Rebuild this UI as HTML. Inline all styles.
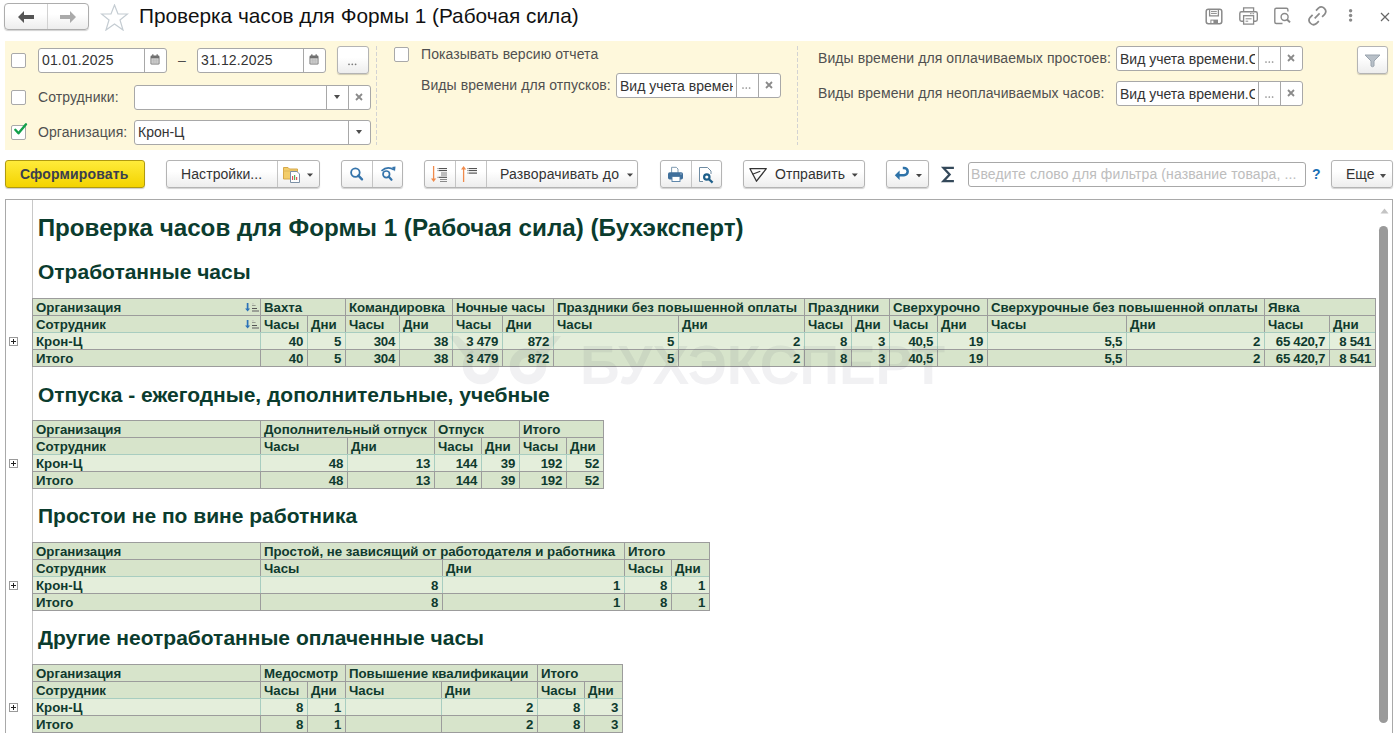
<!DOCTYPE html>
<html><head><meta charset="utf-8">
<style>
*{box-sizing:border-box}
html,body{margin:0;padding:0}
body{width:1396px;height:733px;overflow:hidden;background:#fff;position:relative;font-family:"Liberation Sans",sans-serif;color:#4d4d4d}
.a{position:absolute}
.t{position:absolute;line-height:1;white-space:nowrap}
.l{letter-spacing:.08px;color:#505050}
.btn{position:absolute;border:1px solid #b4b4b4;border-radius:3px;background:linear-gradient(#fff 40%,#ededed);box-shadow:0 1px 1px rgba(0,0,0,.18)}
.inp{position:absolute;border:1px solid #a8a8a8;border-radius:3px;background:#fff}
.sep{position:absolute;top:0;bottom:0;width:1px;background:#cfcfcf}
.cb{position:absolute;width:15px;height:15px;border:1px solid #a9a9a9;border-radius:2px;background:#fff}
.dd{position:absolute;width:0;height:0;border-left:3.5px solid transparent;border-right:3.5px solid transparent;border-top:4px solid #4d4d4d}
.x{position:absolute;font-size:13px;line-height:1;color:#7a7a7a}
.c{position:absolute;line-height:18px;height:16px;font-size:13.25px;font-weight:bold;color:#0f3a2e;white-space:nowrap}
.n{letter-spacing:-.3px}
.pl{position:absolute;left:9px;width:9px;height:9px;border:1px solid #9a9a9a;background:#fff}
.pl:before{content:"";position:absolute;left:1px;top:3px;width:5px;height:1px;background:#222}
.pl:after{content:"";position:absolute;left:3px;top:1px;width:1px;height:5px;background:#222}
.dsh{position:absolute;width:1px;background:repeating-linear-gradient(#d3d3d3 0 4px,transparent 4px 6px)}
</style></head><body>

<!-- ===== HEADER ===== -->
<div class="btn" style="left:4px;top:3px;width:85px;height:27px;border-radius:4px;border-color:#adadad"></div>
<div class="a" style="left:47px;top:4px;width:1px;height:25px;background:#d2d2d2"></div>
<svg class="a" style="left:17px;top:10px" width="18" height="14" viewBox="0 0 18 14"><path d="M1 7 L7 1 L7 5 L17 5 L17 9 L7 9 L7 13 Z" fill="#555"/></svg>
<svg class="a" style="left:59px;top:10px" width="18" height="14" viewBox="0 0 18 14"><path d="M17 7 L11 1 L11 5 L1 5 L1 9 L11 9 L11 13 Z" fill="#aaa"/></svg>
<svg class="a" style="left:100px;top:4px" width="29" height="27" viewBox="0 0 29 27"><path d="M14.5 1 L18 10 L27.5 10 L20 16 L23 26 L14.5 20 L6 26 L9 16 L1.5 10 L11 10 Z" fill="none" stroke="#c4ccd2" stroke-width="1.2" stroke-linejoin="miter"/></svg>
<div class="t" style="left:139px;top:6px;font-size:20.8px;color:#111">Проверка часов для Формы 1 (Рабочая сила)</div>

<!-- header right icons -->
<svg class="a" style="left:1196px;top:0px" width="200" height="36" viewBox="1196 0 200 36">
<g fill="none" stroke="#8a8a8a">
<rect x="1206.2" y="9.2" width="15.6" height="14.6" rx="2.2" stroke-width="1.5"/>
<path d="M1209.6 9.2 L1209.6 15.9 L1218.4 15.9 L1218.4 9.2" stroke-width="1.3"/>
<path d="M1211 11.4 L1216.8 11.4 M1211 13.4 L1216.8 13.4" stroke-width="1"/>
<path d="M1243.6 11.3 L1243.6 7.9 L1253.6 7.9 L1253.6 11.3" stroke-width="1.3"/>
<path d="M1243.3 21.3 L1241.5 21.3 Q1239.8 21.3 1239.8 19.6 L1239.8 13.4 Q1239.8 11.7 1241.5 11.7 L1255.6 11.7 Q1257.3 11.7 1257.3 13.4 L1257.3 19.6 Q1257.3 21.3 1255.6 21.3 L1253.9 21.3" stroke-width="1.4"/>
<rect x="1243.6" y="15.7" width="10" height="8.4" stroke-width="1.3"/>
<path d="M1245.6 18.8 L1251.6 18.8 M1245.6 21.2 L1248.2 21.2" stroke-width="1"/>
<path d="M1282.5 23.5 L1276.3 23.5 Q1274.8 23.5 1274.8 22 L1274.8 9.8 Q1274.8 8.3 1276.3 8.3 L1286.4 8.3 Q1287.9 8.3 1287.9 9.8 L1287.9 11.6" stroke-width="1.4"/>
<circle cx="1284.6" cy="17" r="3.5" stroke-width="1.4"/>
<path d="M1287.1 19.5 L1290 22.4" stroke-width="2"/>
<path d="M1316 10.6 L1318.4 8.2 A4.4 4.4 0 0 1 1324.6 14.4 L1322.1 16.9" stroke-width="1.7"/>
<path d="M1312.6 14.9 L1310.2 17.3 A4.4 4.4 0 0 0 1316.4 23.5 L1318.8 21.1" stroke-width="1.7"/>
<path d="M1314.7 18.3 L1319.6 13.4" stroke-width="1.7"/>
<path d="M1381 13 L1389 21 M1389 13 L1381 21" stroke="#666" stroke-width="1.2"/>
</g>
<g fill="#8a8a8a">
<rect x="1210.4" y="19.6" width="7.6" height="4.4"/>
<rect x="1250" y="13.2" width="1.6" height="1" /><rect x="1252.5" y="13.2" width="1.6" height="1"/>
<circle cx="1350.6" cy="10.8" r="1.7"/><circle cx="1350.6" cy="15.5" r="1.7"/><circle cx="1350.6" cy="20.1" r="1.7"/>
</g>
<rect x="1211.4" y="20.6" width="2" height="2.4" fill="#fff"/>
</svg>
<!-- ===== FILTER PANEL ===== -->
<div class="a" style="left:5px;top:41px;width:1388px;height:109px;background:#fef8dc"></div>
<div class="dsh" style="left:376px;top:46px;height:99px"></div>
<div class="dsh" style="left:797px;top:46px;height:99px"></div>

<!-- row1 -->
<div class="cb" style="left:11px;top:53px"></div>
<div class="inp" style="left:38px;top:48px;width:129px;height:25px"><div class="sep" style="left:105px;background:#a8a8a8"></div></div>
<div class="t" style="left:42px;top:53px;font-size:14px;color:#333;letter-spacing:.15px">01.01.2025</div>
<svg class="a" style="left:150px;top:54px" width="10" height="11" viewBox="0 0 10 11"><rect x="0.5" y="1.5" width="9" height="9" rx="1.2" fill="#6e6e6e"/><rect x="1.3" y="4.3" width="7.4" height="5.4" fill="#d4d4d4"/><path d="M1.3 6.2 H8.7 M1.3 8 H8.7 M3.8 4.3 V9.7 M6.2 4.3 V9.7" stroke="#b0b0b0" stroke-width="0.5"/><rect x="2" y="0.2" width="1.6" height="2.6" rx=".6" fill="#7a7a7a"/><rect x="6.4" y="0.2" width="1.6" height="2.6" rx=".6" fill="#7a7a7a"/></svg>
<div class="t" style="left:178px;top:53px;font-size:14px;color:#4d4d4d">–</div>
<div class="inp" style="left:197px;top:48px;width:129px;height:25px"><div class="sep" style="left:105px;background:#a8a8a8"></div></div>
<div class="t" style="left:201px;top:53px;font-size:14px;color:#333;letter-spacing:.15px">31.12.2025</div>
<svg class="a" style="left:309px;top:54px" width="10" height="11" viewBox="0 0 10 11"><rect x="0.5" y="1.5" width="9" height="9" rx="1.2" fill="#6e6e6e"/><rect x="1.3" y="4.3" width="7.4" height="5.4" fill="#d4d4d4"/><path d="M1.3 6.2 H8.7 M1.3 8 H8.7 M3.8 4.3 V9.7 M6.2 4.3 V9.7" stroke="#b0b0b0" stroke-width="0.5"/><rect x="2" y="0.2" width="1.6" height="2.6" rx=".6" fill="#7a7a7a"/><rect x="6.4" y="0.2" width="1.6" height="2.6" rx=".6" fill="#7a7a7a"/></svg>
<div class="btn" style="left:337px;top:46px;width:32px;height:28px"></div>
<svg class="a" style="left:347px;top:62px" width="12" height="5" viewBox="347 62 12 5"><g fill="#7c7c7c"><circle cx="349" cy="64.3" r=".9"/><circle cx="352.3" cy="64.3" r=".9"/><circle cx="355.6" cy="64.3" r=".9"/></g></svg>

<!-- row2 -->
<div class="cb" style="left:11px;top:90px"></div>
<div class="t l" style="left:38px;top:90px;font-size:14px">Сотрудники:</div>
<div class="inp" style="left:134px;top:85px;width:237px;height:25px"><div class="sep" style="left:191px;background:#a8a8a8"></div><div class="sep" style="left:213px;background:#a8a8a8"></div></div>
<div class="dd" style="left:334px;top:95px"></div>
<svg class="a" style="left:355px;top:93px" width="8" height="8" viewBox="0 0 8 8"><path d="M1 1 L7 7 M7 1 L1 7" stroke="#8a8a8a" stroke-width="1.8"/></svg>

<!-- row3 -->
<div class="cb" style="left:11px;top:125px"></div>
<svg class="a" style="left:13px;top:122px" width="15" height="15" viewBox="0 0 15 15"><path d="M2.3 7.8 L5.5 11.3 L13 2.3" fill="none" stroke="#12a04a" stroke-width="2.4" stroke-linecap="round" stroke-linejoin="round"/></svg>
<div class="t l" style="left:38px;top:125px;font-size:14px">Организация:</div>
<div class="inp" style="left:134px;top:120px;width:237px;height:25px"><div class="sep" style="left:213px;background:#a8a8a8"></div></div>
<div class="t" style="left:138px;top:125px;font-size:14px;color:#333">Крон-Ц</div>
<div class="dd" style="left:356px;top:130px"></div>

<!-- col2 -->
<div class="cb" style="left:394px;top:47px"></div>
<div class="t l" style="left:421px;top:47px;font-size:14px">Показывать версию отчета</div>
<div class="t l" style="left:421px;top:78px;font-size:14px">Виды времени для отпусков:</div>
<div class="inp" style="left:616px;top:73px;width:165px;height:25px;overflow:hidden"><div class="sep" style="left:119px;background:#a8a8a8"></div><div class="sep" style="left:141px;background:#a8a8a8"></div></div>
<div class="a" style="left:617px;top:74px;width:116px;height:23px;overflow:hidden"><div class="t" style="left:3px;top:5px;font-size:14px;color:#333">Вид учета времени.Основное</div></div>
<svg class="a" style="left:741px;top:86px" width="12" height="4" viewBox="741 86 12 4"><g fill="#8c8c8c"><circle cx="743" cy="88" r=".85"/><circle cx="746.3" cy="88" r=".85"/><circle cx="749.6" cy="88" r=".85"/></g></svg>
<svg class="a" style="left:765px;top:81px" width="8" height="8" viewBox="0 0 8 8"><path d="M1 1 L7 7 M7 1 L1 7" stroke="#8a8a8a" stroke-width="1.8"/></svg>

<!-- col3 -->
<div class="t l" style="left:818px;top:51px;font-size:14px">Виды времени для оплачиваемых простоев:</div>
<div class="t l" style="left:818px;top:86px;font-size:14px">Виды времени для неоплачиваемых часов:</div>
<div class="inp" style="left:1116px;top:46px;width:187px;height:25px"><div class="sep" style="left:141px;background:#a8a8a8"></div><div class="sep" style="left:163px;background:#a8a8a8"></div></div>
<div class="a" style="left:1117px;top:47px;width:138px;height:23px;overflow:hidden"><div class="t" style="left:3px;top:5px;font-size:14px;color:#333">Вид учета времени.Основное</div></div>
<svg class="a" style="left:1264px;top:60px" width="12" height="4" viewBox="1264 60 12 4"><g fill="#8c8c8c"><circle cx="1266" cy="62" r=".85"/><circle cx="1269.3" cy="62" r=".85"/><circle cx="1272.6" cy="62" r=".85"/></g></svg>
<svg class="a" style="left:1287px;top:54px" width="8" height="8" viewBox="0 0 8 8"><path d="M1 1 L7 7 M7 1 L1 7" stroke="#8a8a8a" stroke-width="1.8"/></svg>
<div class="inp" style="left:1116px;top:81px;width:187px;height:25px"><div class="sep" style="left:141px;background:#a8a8a8"></div><div class="sep" style="left:163px;background:#a8a8a8"></div></div>
<div class="a" style="left:1117px;top:82px;width:138px;height:23px;overflow:hidden"><div class="t" style="left:3px;top:5px;font-size:14px;color:#333">Вид учета времени.Основное</div></div>
<svg class="a" style="left:1264px;top:95px" width="12" height="4" viewBox="1264 95 12 4"><g fill="#8c8c8c"><circle cx="1266" cy="97" r=".85"/><circle cx="1269.3" cy="97" r=".85"/><circle cx="1272.6" cy="97" r=".85"/></g></svg>
<svg class="a" style="left:1287px;top:89px" width="8" height="8" viewBox="0 0 8 8"><path d="M1 1 L7 7 M7 1 L1 7" stroke="#8a8a8a" stroke-width="1.8"/></svg>
<div class="btn" style="left:1357px;top:46px;width:31px;height:28px"></div>
<svg class="a" style="left:1364px;top:53px" width="17" height="15" viewBox="0 0 17 15"><path d="M1 2 L16 2 L10 8 L10 13 Q8.5 14.5 7 13 L7 8 Z" fill="#b8c0c8" stroke="#9aa4ae" stroke-width="1"/></svg>

<!-- TOOLBAR -->
<div class="a" style="left:5px;top:160px;width:140px;height:28px;border:1px solid #b09a10;border-radius:3px;background:linear-gradient(#ffeb3a,#f3d300);box-shadow:0 1px 1px rgba(0,0,0,.2)"></div>
<div class="t" style="left:20px;top:167px;font-size:14px;font-weight:bold;color:#3a3e4e;letter-spacing:.15px">Сформировать</div>

<div class="btn" style="left:166px;top:160px;width:154px;height:28px"><div class="sep" style="left:110px;background:#c4c4c4"></div></div>
<div class="t" style="left:181px;top:167px;font-size:14px;color:#333;letter-spacing:.08px">Настройки...</div>

<div class="btn" style="left:341px;top:160px;width:62px;height:28px"><div class="sep" style="left:30px;background:#c4c4c4"></div></div>
<div class="btn" style="left:424px;top:160px;width:214px;height:28px"><div class="sep" style="left:30px;background:#c4c4c4"></div><div class="sep" style="left:61px;background:#c4c4c4"></div></div>
<div class="t" style="left:500px;top:167px;font-size:14px;color:#333;letter-spacing:.15px">Разворачивать до</div>
<div class="btn" style="left:660px;top:160px;width:62px;height:28px"><div class="sep" style="left:30px;background:#c4c4c4"></div></div>
<div class="btn" style="left:743px;top:160px;width:122px;height:28px"></div>
<div class="t" style="left:775px;top:167px;font-size:14px;color:#333;letter-spacing:.08px">Отправить</div>
<div class="btn" style="left:886px;top:160px;width:43px;height:28px"></div>

<svg class="a" style="left:270px;top:155px" width="730" height="35" viewBox="270 155 730 35">
<!-- settings folder -->
<path d="M283.5 167.5 L288 167.5 L289.5 169 L297.5 169 L297.5 179 L283.5 179 Z" fill="#f3cd6a" stroke="#d6a84a" stroke-width="1"/>
<path d="M283.5 171 L297.5 171" stroke="#e0b85a" stroke-width="1"/>
<path d="M290.5 171.5 L297 171.5 L299.5 174 L299.5 182.5 L290.5 182.5 Z" fill="#fff" stroke="#7d91a6" stroke-width="1"/>
<rect x="292" y="176" width="1.2" height="4" fill="#e25555"/><rect x="294" y="175" width="1.2" height="5" fill="#58b058"/><rect x="296" y="177" width="1.2" height="3" fill="#e25555"/>
<path d="M307 173.5 L313 173.5 L310 176.8 Z" fill="#444"/>
<!-- search -->
<circle cx="355.4" cy="172.6" r="4.3" fill="none" stroke="#3574ab" stroke-width="1.8"/>
<path d="M358.4 175.6 L362 179.3" stroke="#3574ab" stroke-width="2.4" stroke-linecap="round"/>
<path d="M381.5 170.8 Q387.5 165.5 394 169.8" fill="none" stroke="#3574ab" stroke-width="1.6"/>
<path d="M392 167 L395.5 166.6 L395 171.6 Z" fill="#3574ab"/>
<circle cx="386.3" cy="174.3" r="3.3" fill="none" stroke="#3574ab" stroke-width="1.7"/>
<path d="M388.8 176.8 L391.5 179.8" stroke="#3574ab" stroke-width="2.2" stroke-linecap="round"/>
<!-- sort down -->
<path d="M433.6 166 L433.6 179" stroke="#f08a4b" stroke-width="1.3"/>
<path d="M431 178.5 L436.2 178.5 L433.6 182 Z" fill="#f08a4b"/>
<g fill="#555"><rect x="438.5" y="168" width="8.5" height="1.1"/><rect x="438.5" y="170" width="8.5" height="1.1"/><rect x="438.5" y="176.8" width="8.5" height="1.1"/></g>
<rect x="441" y="172" width="6" height="4.4" fill="#bdbdbd"/>
<g fill="#8a8a8a"><rect x="440" y="179" width="7" height="1"/><rect x="440" y="181" width="7" height="1"/></g>
<g fill="#aaa"><rect x="437.2" y="168" width="1" height="1.1"/><rect x="437.2" y="170" width="1" height="1.1"/><rect x="437.2" y="176.8" width="1" height="1.1"/></g>
<!-- sort up -->
<path d="M463.6 169 L463.6 182" stroke="#f08a4b" stroke-width="1.3"/>
<path d="M461 169.5 L466.2 169.5 L463.6 166 Z" fill="#f08a4b"/>
<g fill="#555"><rect x="468.5" y="168" width="8.5" height="1.1"/><rect x="468.5" y="170" width="8.5" height="1.1"/><rect x="468.5" y="172.5" width="8.5" height="1.2"/></g>
<g fill="#aaa"><rect x="467" y="168" width="1" height="1.1"/><rect x="467" y="170" width="1" height="1.1"/><rect x="467" y="172.5" width="1" height="1.1"/></g>
<path d="M627 173.5 L633 173.5 L630 176.8 Z" fill="#444"/>
<!-- print -->
<path d="M671.6 173 L671.6 167.3 L676.3 167.3 L678 169 L678 173" fill="#fff" stroke="#6f8ea8" stroke-width="0.9"/>
<rect x="668" y="172.3" width="15" height="7.2" rx="1.8" fill="#3f6f9b"/>
<rect x="672" y="176.5" width="8" height="5" fill="#fff" stroke="#4f7ba3" stroke-width="0.9"/>
<rect x="680.5" y="173.5" width="1" height="1" fill="#cfe0ee"/>
<!-- preview -->
<path d="M703 181.5 L699.5 181.5 L699.5 167.5 L707.5 167.5 L711 171 L711 174" fill="#fff" stroke="#5f7f98" stroke-width="0.9"/>
<circle cx="706.8" cy="177" r="2.7" fill="none" stroke="#1d5f8a" stroke-width="2.2"/>
<path d="M709 179.2 L712.6 182.6" stroke="#1d5f8a" stroke-width="2.2"/>
<!-- send -->
<path d="M750 168.7 L766.3 168.7 L756.5 181.2 Z" fill="none" stroke="#333" stroke-width="1.3" stroke-linejoin="round"/>
<path d="M752.5 174.2 L760.3 171.3" stroke="#333" stroke-width="1.2"/>
<path d="M851.8 173.5 L857.8 173.5 L854.8 176.8 Z" fill="#444"/>
<!-- back arrow + sigma -->
<path d="M899 175.3 L904 175.3 A3.7 3.7 0 0 0 904 167.9 L902.8 167.9" fill="none" stroke="#2d72a8" stroke-width="2.5"/>
<path d="M894.8 175.3 L899.6 170.6 L899.6 180 Z" fill="#2d72a8"/>
<path d="M916 174 L922 174 L919 177.2 Z" fill="#444"/>
<path d="M953.9 167.9 L943.5 167.9 L949.6 174.6 L943.5 181.1 L953.9 181.1" fill="none" stroke="#34495a" stroke-width="2.3" stroke-linejoin="miter"/>
</svg>
<div class="inp" style="left:968px;top:162px;width:338px;height:25px"></div>
<div class="t" style="left:971px;top:167px;font-size:14px;color:#bdbdbd;letter-spacing:.11px">Введите слово для фильтра (название товара, ...</div>
<div class="t" style="left:1312px;top:167px;font-size:14px;color:#1a6fb5;font-weight:bold">?</div>
<div class="btn" style="left:1331px;top:160px;width:62px;height:28px"></div>
<div class="t" style="left:1346px;top:167px;font-size:14px;color:#333">Еще</div>
<div class="dd" style="left:1380px;top:174px"></div>

<!-- REPORT -->
<div class="a" style="left:5px;top:199px;width:1388px;height:540px;border:1px solid #a9a9a9;border-bottom:0"></div>
<div class="a" style="left:32px;top:200px;width:1px;height:533px;background:#c8c8c8"></div>
<div class="t" style="left:37.7px;top:216.2px;font-size:24.2px;font-weight:bold;color:#0b3c2e">Проверка часов для Формы 1 (Рабочая сила) (Бухэксперт)</div>
<div class="t" style="left:38px;top:261px;font-size:21px;font-weight:bold;color:#0b3c2e">Отработанные часы</div>
<div class="t" style="left:38px;top:384px;font-size:21px;font-weight:bold;color:#0b3c2e">Отпуска - ежегодные, дополнительные, учебные</div>
<div class="t" style="left:38px;top:505px;font-size:21px;font-weight:bold;color:#0b3c2e">Простои не по вине работника</div>
<div class="t" style="left:38px;top:627px;font-size:21px;font-weight:bold;color:#0b3c2e">Другие неотработанные оплаченные часы</div>
<div class="a" style="left:32px;top:298px;width:1343px;height:34px;background:#d7e4cb"></div>
<div class="a" style="left:32px;top:332px;width:1343px;height:17px;background:#e4eedb"></div>
<div class="a" style="left:32px;top:349px;width:1343px;height:17px;background:#d7e4cb"></div>
<div class="c" style="left:36px;top:299px">Организация</div>
<div class="a" style="left:260px;top:298px;width:1px;height:17px;background:#9c9c9c"></div>
<div class="c" style="left:264px;top:299px">Вахта</div>
<div class="a" style="left:345px;top:298px;width:1px;height:17px;background:#9c9c9c"></div>
<div class="c" style="left:349px;top:299px">Командировка</div>
<div class="a" style="left:452px;top:298px;width:1px;height:17px;background:#9c9c9c"></div>
<div class="c" style="left:456px;top:299px">Ночные часы</div>
<div class="a" style="left:553px;top:298px;width:1px;height:17px;background:#9c9c9c"></div>
<div class="c" style="left:557px;top:299px">Праздники без повышенной оплаты</div>
<div class="a" style="left:804px;top:298px;width:1px;height:17px;background:#9c9c9c"></div>
<div class="c" style="left:808px;top:299px">Праздники</div>
<div class="a" style="left:889px;top:298px;width:1px;height:17px;background:#9c9c9c"></div>
<div class="c" style="left:893px;top:299px">Сверхурочно</div>
<div class="a" style="left:987px;top:298px;width:1px;height:17px;background:#9c9c9c"></div>
<div class="c" style="left:991px;top:299px">Сверхурочные без повышенной оплаты</div>
<div class="a" style="left:1264px;top:298px;width:1px;height:17px;background:#9c9c9c"></div>
<div class="c" style="left:1268px;top:299px">Явка</div>
<div class="c" style="left:36px;top:316px">Сотрудник</div>
<div class="a" style="left:260px;top:315px;width:1px;height:17px;background:#9c9c9c"></div>
<div class="c" style="left:264px;top:316px">Часы</div>
<div class="a" style="left:307px;top:315px;width:1px;height:17px;background:#9c9c9c"></div>
<div class="c" style="left:311px;top:316px">Дни</div>
<div class="a" style="left:345px;top:315px;width:1px;height:17px;background:#9c9c9c"></div>
<div class="c" style="left:349px;top:316px">Часы</div>
<div class="a" style="left:399px;top:315px;width:1px;height:17px;background:#9c9c9c"></div>
<div class="c" style="left:403px;top:316px">Дни</div>
<div class="a" style="left:452px;top:315px;width:1px;height:17px;background:#9c9c9c"></div>
<div class="c" style="left:456px;top:316px">Часы</div>
<div class="a" style="left:502px;top:315px;width:1px;height:17px;background:#9c9c9c"></div>
<div class="c" style="left:506px;top:316px">Дни</div>
<div class="a" style="left:553px;top:315px;width:1px;height:17px;background:#9c9c9c"></div>
<div class="c" style="left:557px;top:316px">Часы</div>
<div class="a" style="left:678px;top:315px;width:1px;height:17px;background:#9c9c9c"></div>
<div class="c" style="left:682px;top:316px">Дни</div>
<div class="a" style="left:804px;top:315px;width:1px;height:17px;background:#9c9c9c"></div>
<div class="c" style="left:808px;top:316px">Часы</div>
<div class="a" style="left:851px;top:315px;width:1px;height:17px;background:#9c9c9c"></div>
<div class="c" style="left:855px;top:316px">Дни</div>
<div class="a" style="left:889px;top:315px;width:1px;height:17px;background:#9c9c9c"></div>
<div class="c" style="left:893px;top:316px">Часы</div>
<div class="a" style="left:937px;top:315px;width:1px;height:17px;background:#9c9c9c"></div>
<div class="c" style="left:941px;top:316px">Дни</div>
<div class="a" style="left:987px;top:315px;width:1px;height:17px;background:#9c9c9c"></div>
<div class="c" style="left:991px;top:316px">Часы</div>
<div class="a" style="left:1126px;top:315px;width:1px;height:17px;background:#9c9c9c"></div>
<div class="c" style="left:1130px;top:316px">Дни</div>
<div class="a" style="left:1264px;top:315px;width:1px;height:17px;background:#9c9c9c"></div>
<div class="c" style="left:1268px;top:316px">Часы</div>
<div class="a" style="left:1329px;top:315px;width:1px;height:17px;background:#9c9c9c"></div>
<div class="c" style="left:1333px;top:316px">Дни</div>
<div class="c" style="left:36px;top:333px">Крон-Ц</div>
<div class="a" style="left:260px;top:333px;width:1px;height:16px;background:#a8cdc0"></div>
<div class="c n" style="left:260px;top:333px;width:43px;text-align:right">40</div>
<div class="a" style="left:307px;top:333px;width:1px;height:16px;background:#a8cdc0"></div>
<div class="c n" style="left:307px;top:333px;width:34px;text-align:right">5</div>
<div class="a" style="left:345px;top:333px;width:1px;height:16px;background:#a8cdc0"></div>
<div class="c n" style="left:345px;top:333px;width:50px;text-align:right">304</div>
<div class="a" style="left:399px;top:333px;width:1px;height:16px;background:#a8cdc0"></div>
<div class="c n" style="left:399px;top:333px;width:49px;text-align:right">38</div>
<div class="a" style="left:452px;top:333px;width:1px;height:16px;background:#a8cdc0"></div>
<div class="c n" style="left:452px;top:333px;width:46px;text-align:right">3 479</div>
<div class="a" style="left:502px;top:333px;width:1px;height:16px;background:#a8cdc0"></div>
<div class="c n" style="left:502px;top:333px;width:47px;text-align:right">872</div>
<div class="a" style="left:553px;top:333px;width:1px;height:16px;background:#a8cdc0"></div>
<div class="c n" style="left:553px;top:333px;width:121px;text-align:right">5</div>
<div class="a" style="left:678px;top:333px;width:1px;height:16px;background:#a8cdc0"></div>
<div class="c n" style="left:678px;top:333px;width:122px;text-align:right">2</div>
<div class="a" style="left:804px;top:333px;width:1px;height:16px;background:#a8cdc0"></div>
<div class="c n" style="left:804px;top:333px;width:43px;text-align:right">8</div>
<div class="a" style="left:851px;top:333px;width:1px;height:16px;background:#a8cdc0"></div>
<div class="c n" style="left:851px;top:333px;width:34px;text-align:right">3</div>
<div class="a" style="left:889px;top:333px;width:1px;height:16px;background:#a8cdc0"></div>
<div class="c n" style="left:889px;top:333px;width:44px;text-align:right">40,5</div>
<div class="a" style="left:937px;top:333px;width:1px;height:16px;background:#a8cdc0"></div>
<div class="c n" style="left:937px;top:333px;width:46px;text-align:right">19</div>
<div class="a" style="left:987px;top:333px;width:1px;height:16px;background:#a8cdc0"></div>
<div class="c n" style="left:987px;top:333px;width:135px;text-align:right">5,5</div>
<div class="a" style="left:1126px;top:333px;width:1px;height:16px;background:#a8cdc0"></div>
<div class="c n" style="left:1126px;top:333px;width:134px;text-align:right">2</div>
<div class="a" style="left:1264px;top:333px;width:1px;height:16px;background:#a8cdc0"></div>
<div class="c n" style="left:1264px;top:333px;width:61px;text-align:right">65 420,7</div>
<div class="a" style="left:1329px;top:333px;width:1px;height:16px;background:#a8cdc0"></div>
<div class="c n" style="left:1329px;top:333px;width:42px;text-align:right">8 541</div>
<div class="c" style="left:36px;top:350px">Итого</div>
<div class="a" style="left:260px;top:349px;width:1px;height:17px;background:#9c9c9c"></div>
<div class="c n" style="left:260px;top:350px;width:43px;text-align:right">40</div>
<div class="a" style="left:307px;top:349px;width:1px;height:17px;background:#9c9c9c"></div>
<div class="c n" style="left:307px;top:350px;width:34px;text-align:right">5</div>
<div class="a" style="left:345px;top:349px;width:1px;height:17px;background:#9c9c9c"></div>
<div class="c n" style="left:345px;top:350px;width:50px;text-align:right">304</div>
<div class="a" style="left:399px;top:349px;width:1px;height:17px;background:#9c9c9c"></div>
<div class="c n" style="left:399px;top:350px;width:49px;text-align:right">38</div>
<div class="a" style="left:452px;top:349px;width:1px;height:17px;background:#9c9c9c"></div>
<div class="c n" style="left:452px;top:350px;width:46px;text-align:right">3 479</div>
<div class="a" style="left:502px;top:349px;width:1px;height:17px;background:#9c9c9c"></div>
<div class="c n" style="left:502px;top:350px;width:47px;text-align:right">872</div>
<div class="a" style="left:553px;top:349px;width:1px;height:17px;background:#9c9c9c"></div>
<div class="c n" style="left:553px;top:350px;width:121px;text-align:right">5</div>
<div class="a" style="left:678px;top:349px;width:1px;height:17px;background:#9c9c9c"></div>
<div class="c n" style="left:678px;top:350px;width:122px;text-align:right">2</div>
<div class="a" style="left:804px;top:349px;width:1px;height:17px;background:#9c9c9c"></div>
<div class="c n" style="left:804px;top:350px;width:43px;text-align:right">8</div>
<div class="a" style="left:851px;top:349px;width:1px;height:17px;background:#9c9c9c"></div>
<div class="c n" style="left:851px;top:350px;width:34px;text-align:right">3</div>
<div class="a" style="left:889px;top:349px;width:1px;height:17px;background:#9c9c9c"></div>
<div class="c n" style="left:889px;top:350px;width:44px;text-align:right">40,5</div>
<div class="a" style="left:937px;top:349px;width:1px;height:17px;background:#9c9c9c"></div>
<div class="c n" style="left:937px;top:350px;width:46px;text-align:right">19</div>
<div class="a" style="left:987px;top:349px;width:1px;height:17px;background:#9c9c9c"></div>
<div class="c n" style="left:987px;top:350px;width:135px;text-align:right">5,5</div>
<div class="a" style="left:1126px;top:349px;width:1px;height:17px;background:#9c9c9c"></div>
<div class="c n" style="left:1126px;top:350px;width:134px;text-align:right">2</div>
<div class="a" style="left:1264px;top:349px;width:1px;height:17px;background:#9c9c9c"></div>
<div class="c n" style="left:1264px;top:350px;width:61px;text-align:right">65 420,7</div>
<div class="a" style="left:1329px;top:349px;width:1px;height:17px;background:#9c9c9c"></div>
<div class="c n" style="left:1329px;top:350px;width:42px;text-align:right">8 541</div>
<div class="a" style="left:32px;top:298px;width:1344px;height:1px;background:#9c9c9c"></div>
<div class="a" style="left:32px;top:315px;width:1344px;height:1px;background:#9c9c9c"></div>
<div class="a" style="left:32px;top:332px;width:1344px;height:1px;background:#a8cdc0"></div>
<div class="a" style="left:32px;top:349px;width:1344px;height:1px;background:#9c9c9c"></div>
<div class="a" style="left:32px;top:366px;width:1344px;height:1px;background:#9c9c9c"></div>
<div class="a" style="left:32px;top:298px;width:1px;height:69px;background:#9c9c9c"></div>
<div class="a" style="left:1375px;top:298px;width:1px;height:69px;background:#9c9c9c"></div>
<div class="pl" style="top:337px"></div>
<svg class="a" style="left:244px;top:302px" width="16" height="11" viewBox="0 0 16 11"><path d="M3.6 1 L3.6 7" stroke="#2a72b8" stroke-width="1.7"/><path d="M1.1 6.6 L6.1 6.6 L3.6 9.4 Z" fill="#2a72b8"/><rect x="8.2" y="1" width="1.5" height="1.4" fill="#c4c8bc"/><rect x="8" y="3" width="3.6" height="0.9" fill="#8f948a"/><rect x="8" y="6" width="5" height="1" fill="#555"/><rect x="8" y="8.2" width="7" height="1.6" fill="#8c8f88"/></svg>
<svg class="a" style="left:244px;top:319px" width="16" height="11" viewBox="0 0 16 11"><path d="M3.6 1 L3.6 7" stroke="#2a72b8" stroke-width="1.7"/><path d="M1.1 6.6 L6.1 6.6 L3.6 9.4 Z" fill="#2a72b8"/><rect x="8.2" y="1" width="1.5" height="1.4" fill="#c4c8bc"/><rect x="8" y="3" width="3.6" height="0.9" fill="#8f948a"/><rect x="8" y="6" width="5" height="1" fill="#555"/><rect x="8" y="8.2" width="7" height="1.6" fill="#8c8f88"/></svg>
<div class="a" style="left:32px;top:420px;width:571px;height:34px;background:#d7e4cb"></div>
<div class="a" style="left:32px;top:454px;width:571px;height:17px;background:#e4eedb"></div>
<div class="a" style="left:32px;top:471px;width:571px;height:17px;background:#d7e4cb"></div>
<div class="c" style="left:36px;top:421px">Организация</div>
<div class="a" style="left:260px;top:420px;width:1px;height:17px;background:#9c9c9c"></div>
<div class="c" style="left:264px;top:421px">Дополнительный отпуск</div>
<div class="a" style="left:434px;top:420px;width:1px;height:17px;background:#9c9c9c"></div>
<div class="c" style="left:438px;top:421px">Отпуск</div>
<div class="a" style="left:519px;top:420px;width:1px;height:17px;background:#9c9c9c"></div>
<div class="c" style="left:523px;top:421px">Итого</div>
<div class="c" style="left:36px;top:438px">Сотрудник</div>
<div class="a" style="left:260px;top:437px;width:1px;height:17px;background:#9c9c9c"></div>
<div class="c" style="left:264px;top:438px">Часы</div>
<div class="a" style="left:347px;top:437px;width:1px;height:17px;background:#9c9c9c"></div>
<div class="c" style="left:351px;top:438px">Дни</div>
<div class="a" style="left:434px;top:437px;width:1px;height:17px;background:#9c9c9c"></div>
<div class="c" style="left:438px;top:438px">Часы</div>
<div class="a" style="left:481px;top:437px;width:1px;height:17px;background:#9c9c9c"></div>
<div class="c" style="left:485px;top:438px">Дни</div>
<div class="a" style="left:519px;top:437px;width:1px;height:17px;background:#9c9c9c"></div>
<div class="c" style="left:523px;top:438px">Часы</div>
<div class="a" style="left:566px;top:437px;width:1px;height:17px;background:#9c9c9c"></div>
<div class="c" style="left:570px;top:438px">Дни</div>
<div class="c" style="left:36px;top:455px">Крон-Ц</div>
<div class="a" style="left:260px;top:455px;width:1px;height:16px;background:#a8cdc0"></div>
<div class="c n" style="left:260px;top:455px;width:83px;text-align:right">48</div>
<div class="a" style="left:347px;top:455px;width:1px;height:16px;background:#a8cdc0"></div>
<div class="c n" style="left:347px;top:455px;width:83px;text-align:right">13</div>
<div class="a" style="left:434px;top:455px;width:1px;height:16px;background:#a8cdc0"></div>
<div class="c n" style="left:434px;top:455px;width:43px;text-align:right">144</div>
<div class="a" style="left:481px;top:455px;width:1px;height:16px;background:#a8cdc0"></div>
<div class="c n" style="left:481px;top:455px;width:34px;text-align:right">39</div>
<div class="a" style="left:519px;top:455px;width:1px;height:16px;background:#a8cdc0"></div>
<div class="c n" style="left:519px;top:455px;width:43px;text-align:right">192</div>
<div class="a" style="left:566px;top:455px;width:1px;height:16px;background:#a8cdc0"></div>
<div class="c n" style="left:566px;top:455px;width:33px;text-align:right">52</div>
<div class="c" style="left:36px;top:472px">Итого</div>
<div class="a" style="left:260px;top:471px;width:1px;height:17px;background:#9c9c9c"></div>
<div class="c n" style="left:260px;top:472px;width:83px;text-align:right">48</div>
<div class="a" style="left:347px;top:471px;width:1px;height:17px;background:#9c9c9c"></div>
<div class="c n" style="left:347px;top:472px;width:83px;text-align:right">13</div>
<div class="a" style="left:434px;top:471px;width:1px;height:17px;background:#9c9c9c"></div>
<div class="c n" style="left:434px;top:472px;width:43px;text-align:right">144</div>
<div class="a" style="left:481px;top:471px;width:1px;height:17px;background:#9c9c9c"></div>
<div class="c n" style="left:481px;top:472px;width:34px;text-align:right">39</div>
<div class="a" style="left:519px;top:471px;width:1px;height:17px;background:#9c9c9c"></div>
<div class="c n" style="left:519px;top:472px;width:43px;text-align:right">192</div>
<div class="a" style="left:566px;top:471px;width:1px;height:17px;background:#9c9c9c"></div>
<div class="c n" style="left:566px;top:472px;width:33px;text-align:right">52</div>
<div class="a" style="left:32px;top:420px;width:572px;height:1px;background:#9c9c9c"></div>
<div class="a" style="left:32px;top:437px;width:572px;height:1px;background:#9c9c9c"></div>
<div class="a" style="left:32px;top:454px;width:572px;height:1px;background:#a8cdc0"></div>
<div class="a" style="left:32px;top:471px;width:572px;height:1px;background:#9c9c9c"></div>
<div class="a" style="left:32px;top:488px;width:572px;height:1px;background:#9c9c9c"></div>
<div class="a" style="left:32px;top:420px;width:1px;height:69px;background:#9c9c9c"></div>
<div class="a" style="left:603px;top:420px;width:1px;height:69px;background:#9c9c9c"></div>
<div class="pl" style="top:459px"></div>
<div class="a" style="left:32px;top:542px;width:677px;height:34px;background:#d7e4cb"></div>
<div class="a" style="left:32px;top:576px;width:677px;height:17px;background:#e4eedb"></div>
<div class="a" style="left:32px;top:593px;width:677px;height:17px;background:#d7e4cb"></div>
<div class="c" style="left:36px;top:543px">Организация</div>
<div class="a" style="left:260px;top:542px;width:1px;height:17px;background:#9c9c9c"></div>
<div class="c" style="left:264px;top:543px">Простой, не зависящий от работодателя и работника</div>
<div class="a" style="left:624px;top:542px;width:1px;height:17px;background:#9c9c9c"></div>
<div class="c" style="left:628px;top:543px">Итого</div>
<div class="c" style="left:36px;top:560px">Сотрудник</div>
<div class="a" style="left:260px;top:559px;width:1px;height:17px;background:#9c9c9c"></div>
<div class="c" style="left:264px;top:560px">Часы</div>
<div class="a" style="left:442px;top:559px;width:1px;height:17px;background:#9c9c9c"></div>
<div class="c" style="left:446px;top:560px">Дни</div>
<div class="a" style="left:624px;top:559px;width:1px;height:17px;background:#9c9c9c"></div>
<div class="c" style="left:628px;top:560px">Часы</div>
<div class="a" style="left:671px;top:559px;width:1px;height:17px;background:#9c9c9c"></div>
<div class="c" style="left:675px;top:560px">Дни</div>
<div class="c" style="left:36px;top:577px">Крон-Ц</div>
<div class="a" style="left:260px;top:577px;width:1px;height:16px;background:#a8cdc0"></div>
<div class="c n" style="left:260px;top:577px;width:178px;text-align:right">8</div>
<div class="a" style="left:442px;top:577px;width:1px;height:16px;background:#a8cdc0"></div>
<div class="c n" style="left:442px;top:577px;width:178px;text-align:right">1</div>
<div class="a" style="left:624px;top:577px;width:1px;height:16px;background:#a8cdc0"></div>
<div class="c n" style="left:624px;top:577px;width:43px;text-align:right">8</div>
<div class="a" style="left:671px;top:577px;width:1px;height:16px;background:#a8cdc0"></div>
<div class="c n" style="left:671px;top:577px;width:34px;text-align:right">1</div>
<div class="c" style="left:36px;top:594px">Итого</div>
<div class="a" style="left:260px;top:593px;width:1px;height:17px;background:#9c9c9c"></div>
<div class="c n" style="left:260px;top:594px;width:178px;text-align:right">8</div>
<div class="a" style="left:442px;top:593px;width:1px;height:17px;background:#9c9c9c"></div>
<div class="c n" style="left:442px;top:594px;width:178px;text-align:right">1</div>
<div class="a" style="left:624px;top:593px;width:1px;height:17px;background:#9c9c9c"></div>
<div class="c n" style="left:624px;top:594px;width:43px;text-align:right">8</div>
<div class="a" style="left:671px;top:593px;width:1px;height:17px;background:#9c9c9c"></div>
<div class="c n" style="left:671px;top:594px;width:34px;text-align:right">1</div>
<div class="a" style="left:32px;top:542px;width:678px;height:1px;background:#9c9c9c"></div>
<div class="a" style="left:32px;top:559px;width:678px;height:1px;background:#9c9c9c"></div>
<div class="a" style="left:32px;top:576px;width:678px;height:1px;background:#a8cdc0"></div>
<div class="a" style="left:32px;top:593px;width:678px;height:1px;background:#9c9c9c"></div>
<div class="a" style="left:32px;top:610px;width:678px;height:1px;background:#9c9c9c"></div>
<div class="a" style="left:32px;top:542px;width:1px;height:69px;background:#9c9c9c"></div>
<div class="a" style="left:709px;top:542px;width:1px;height:69px;background:#9c9c9c"></div>
<div class="pl" style="top:581px"></div>
<div class="a" style="left:32px;top:664px;width:590px;height:34px;background:#d7e4cb"></div>
<div class="a" style="left:32px;top:698px;width:590px;height:17px;background:#e4eedb"></div>
<div class="a" style="left:32px;top:715px;width:590px;height:17px;background:#d7e4cb"></div>
<div class="c" style="left:36px;top:665px">Организация</div>
<div class="a" style="left:260px;top:664px;width:1px;height:17px;background:#9c9c9c"></div>
<div class="c" style="left:264px;top:665px">Медосмотр</div>
<div class="a" style="left:345px;top:664px;width:1px;height:17px;background:#9c9c9c"></div>
<div class="c" style="left:349px;top:665px">Повышение квалификации</div>
<div class="a" style="left:537px;top:664px;width:1px;height:17px;background:#9c9c9c"></div>
<div class="c" style="left:541px;top:665px">Итого</div>
<div class="c" style="left:36px;top:682px">Сотрудник</div>
<div class="a" style="left:260px;top:681px;width:1px;height:17px;background:#9c9c9c"></div>
<div class="c" style="left:264px;top:682px">Часы</div>
<div class="a" style="left:307px;top:681px;width:1px;height:17px;background:#9c9c9c"></div>
<div class="c" style="left:311px;top:682px">Дни</div>
<div class="a" style="left:345px;top:681px;width:1px;height:17px;background:#9c9c9c"></div>
<div class="c" style="left:349px;top:682px">Часы</div>
<div class="a" style="left:441px;top:681px;width:1px;height:17px;background:#9c9c9c"></div>
<div class="c" style="left:445px;top:682px">Дни</div>
<div class="a" style="left:537px;top:681px;width:1px;height:17px;background:#9c9c9c"></div>
<div class="c" style="left:541px;top:682px">Часы</div>
<div class="a" style="left:584px;top:681px;width:1px;height:17px;background:#9c9c9c"></div>
<div class="c" style="left:588px;top:682px">Дни</div>
<div class="c" style="left:36px;top:699px">Крон-Ц</div>
<div class="a" style="left:260px;top:699px;width:1px;height:16px;background:#a8cdc0"></div>
<div class="c n" style="left:260px;top:699px;width:43px;text-align:right">8</div>
<div class="a" style="left:307px;top:699px;width:1px;height:16px;background:#a8cdc0"></div>
<div class="c n" style="left:307px;top:699px;width:34px;text-align:right">1</div>
<div class="a" style="left:345px;top:699px;width:1px;height:16px;background:#a8cdc0"></div>
<div class="c n" style="left:345px;top:699px;width:92px;text-align:right"></div>
<div class="a" style="left:441px;top:699px;width:1px;height:16px;background:#a8cdc0"></div>
<div class="c n" style="left:441px;top:699px;width:92px;text-align:right">2</div>
<div class="a" style="left:537px;top:699px;width:1px;height:16px;background:#a8cdc0"></div>
<div class="c n" style="left:537px;top:699px;width:43px;text-align:right">8</div>
<div class="a" style="left:584px;top:699px;width:1px;height:16px;background:#a8cdc0"></div>
<div class="c n" style="left:584px;top:699px;width:34px;text-align:right">3</div>
<div class="c" style="left:36px;top:716px">Итого</div>
<div class="a" style="left:260px;top:715px;width:1px;height:17px;background:#9c9c9c"></div>
<div class="c n" style="left:260px;top:716px;width:43px;text-align:right">8</div>
<div class="a" style="left:307px;top:715px;width:1px;height:17px;background:#9c9c9c"></div>
<div class="c n" style="left:307px;top:716px;width:34px;text-align:right">1</div>
<div class="a" style="left:345px;top:715px;width:1px;height:17px;background:#9c9c9c"></div>
<div class="c n" style="left:345px;top:716px;width:92px;text-align:right"></div>
<div class="a" style="left:441px;top:715px;width:1px;height:17px;background:#9c9c9c"></div>
<div class="c n" style="left:441px;top:716px;width:92px;text-align:right">2</div>
<div class="a" style="left:537px;top:715px;width:1px;height:17px;background:#9c9c9c"></div>
<div class="c n" style="left:537px;top:716px;width:43px;text-align:right">8</div>
<div class="a" style="left:584px;top:715px;width:1px;height:17px;background:#9c9c9c"></div>
<div class="c n" style="left:584px;top:716px;width:34px;text-align:right">3</div>
<div class="a" style="left:32px;top:664px;width:591px;height:1px;background:#9c9c9c"></div>
<div class="a" style="left:32px;top:681px;width:591px;height:1px;background:#9c9c9c"></div>
<div class="a" style="left:32px;top:698px;width:591px;height:1px;background:#a8cdc0"></div>
<div class="a" style="left:32px;top:715px;width:591px;height:1px;background:#9c9c9c"></div>
<div class="a" style="left:32px;top:732px;width:591px;height:1px;background:#9c9c9c"></div>
<div class="a" style="left:32px;top:664px;width:1px;height:69px;background:#9c9c9c"></div>
<div class="a" style="left:622px;top:664px;width:1px;height:69px;background:#9c9c9c"></div>
<div class="pl" style="top:703px"></div>
<div class="t" style="left:580px;top:338px;font-size:55px;font-weight:bold;color:rgba(40,40,70,.065)">БУХЭКСПЕРТ</div>
<svg class="a" style="left:440px;top:320px" width="130" height="75" viewBox="440 320 130 75"><g fill="none" stroke="rgba(40,40,70,.065)" stroke-width="9.5"><circle cx="481" cy="366" r="13.5"/><circle cx="528" cy="366" r="13.5"/></g><g fill="rgba(40,40,70,.065)"><path d="M449 336 L458 336 L474 352 L466 358 Z"/><path d="M561 336 L552 336 L536 352 L544 358 Z"/></g></svg>
<svg class="a" style="left:1380px;top:208px" width="9" height="6" viewBox="0 0 9 6"><path d="M0.5 5.5 L4.5 0.5 L8.5 5.5 Z" fill="#c4c4c4"/></svg>
<div class="a" style="left:1379px;top:226px;width:9px;height:497px;border-radius:4.5px;background:#9a9a9a"></div>
</body></html>
